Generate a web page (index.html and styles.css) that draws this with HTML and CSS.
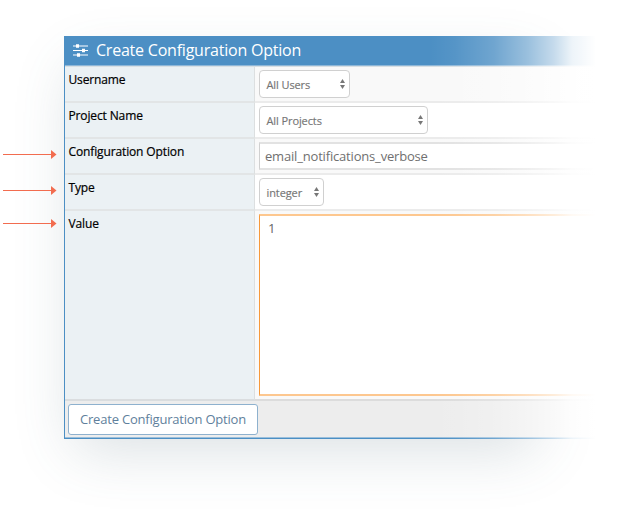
FILE: index.html
```html
<!DOCTYPE html>
<html lang="en">
<head>
<meta charset="utf-8">
<title>Create Configuration Option</title>
<link rel="stylesheet" href="styles.css">
</head>
<body>
<main class="page">
  <aside class="pointers">
    <svg class="arrow" viewBox="0 0 54 9"><path d="M0 4.5h49"/><path class="head" d="M48 0l5.5 4.5L48 9z"/></svg>
    <svg class="arrow" viewBox="0 0 54 9"><path d="M0 4.5h49"/><path class="head" d="M48 0l5.5 4.5L48 9z"/></svg>
    <svg class="arrow arrow-last" viewBox="0 0 54 9"><path d="M0 4.5h49"/><path class="head" d="M48 0l5.5 4.5L48 9z"/></svg>
  </aside>
  <div class="stage">
    <form class="panel">
      <header class="panel-head">
        <svg class="sliders" viewBox="0 0 15 13"><path d="M0 2h15M0 6.500h15M0 11h15"/><path class="knob" d="M3 .3h3v3.400H3zM9 4.800h3v3.400H9zM4 9.300h3v3.400H4z"/></svg>
        <h1 class="title">Create Configuration Option</h1>
      </header>
      <div class="row shaded">
        <span class="label">Username</span>
        <div class="field"><div class="select users"><span>All Users</span><svg class="updown" viewBox="0 0 5 10"><path d="M2.500 0L5 4H0zM0 6h5L2.500 10z"/></svg></div></div>
      </div>
      <div class="row">
        <span class="label">Project Name</span>
        <div class="field"><div class="select projects"><span>All Projects</span><svg class="updown" viewBox="0 0 5 10"><path d="M2.500 0L5 4H0zM0 6h5L2.500 10z"/></svg></div></div>
      </div>
      <div class="row shaded">
        <span class="label">Configuration Option</span>
        <div class="field"><div class="input">email_notifications_verbose</div></div>
      </div>
      <div class="row">
        <span class="label">Type</span>
        <div class="field"><div class="select type"><span>integer</span><svg class="updown" viewBox="0 0 5 10"><path d="M2.500 0L5 4H0zM0 6h5L2.500 10z"/></svg></div></div>
      </div>
      <div class="row shaded value-row">
        <span class="label">Value</span>
        <div class="field"><div class="textarea">1</div></div>
      </div>
      <footer class="panel-foot"><button class="submit" type="button">Create Configuration Option</button></footer>
    </form>
  </div>
</main>
</body>
</html>
```
FILE: styles.css
```css
* { box-sizing: border-box; }
body { margin: 0; background: #fff; font-family: "Open Sans", sans-serif; }
.page { display: flex; width: 622px; height: 516px; overflow: hidden; }
.pointers { width: 64px; flex: none; padding: 150px 0 0 3px; z-index: 1; }
.arrow { display: block; width: 54px; height: 9px; margin-bottom: 27px; stroke: #f26c4f; fill: none; }
.arrow-last { margin-top: -3px; }
.arrow .head { fill: #f26c4f; stroke: none; }
.stage { position: relative; flex: 1; padding-top: 36px; }
.stage::before {
  content: "";
  position: absolute;
  left: 16px; top: 56px; width: 450px; height: 372px;
  box-shadow: 0 16px 56px 6px rgba(70, 98, 116, .2);
}
.stage::after {
  content: "";
  position: absolute;
  inset: 36px 0 77px 0;
  background: linear-gradient(to right, rgba(255,255,255,0) 366px, rgba(255,255,255,.05) 390px, rgba(255,255,255,.2) 430px, rgba(255,255,255,.44) 464px, rgba(255,255,255,.68) 490px, rgba(255,255,255,.9) 508px, #fff 532px);
}
.panel {
  position: relative;
  width: 558px; height: 403px;
  background: #fff;
  border-left: 1px solid #4c8fc4;
}
.panel-head {
  display: flex; align-items: center;
  height: 31px; padding: 0 0 3px 8px;
  background: #4c8fc4;
  border-bottom: 1px solid #d8dfe3;
  box-shadow: inset 0 -1px #8eb7d8;
  color: #fff;
}
.sliders { width: 15px; height: 13px; margin: 1px 8px 0 0; stroke: #fff; stroke-width: 1.2; fill: none; }
.sliders .knob { fill: #fff; stroke: none; }
.title { margin: 0; font-size: 16px; line-height: 22px; font-weight: 400; letter-spacing: -.22px; white-space: nowrap; }
.row { display: flex; height: 36px; background: #fff; border-bottom: 2px solid #ebebeb; }
.shaded { background: #f9f9f9; }
.label {
  width: 190px; flex: none;
  margin-bottom: -2px; padding: 4px 0 0 3.500px;
  background: #ebf1f4; border-right: 1px solid #dcdfe0; border-bottom: 2px solid #e2e5e6;
  color: #000; font-size: 12px; line-height: 17px; letter-spacing: -.13px;
  -webkit-text-stroke: .2px #000;
}
.field { flex: 1; padding: 3px 0 0 4px; }
.select {
  display: flex; align-items: center; justify-content: space-between;
  height: 28px; padding: 0 4px 0 6.500px;
  background: #fff; border: 1px solid #d0d0d0; border-radius: 4px;
  color: #757575; font-size: 11px; letter-spacing: -.1px;
  -webkit-text-stroke: .15px #757575;
}
.users { width: 91px; }
.projects { width: 169px; }
.type { width: 65px; }
.updown { width: 5px; height: 10px; fill: #777; }
.input {
  height: 28px; padding-left: 5px;
  border: solid #e2e2e2; border-width: 2px 0 2px 1px; border-left-color: #d0d0d0; background: #fff;
  color: #707070; font-size: 13px; line-height: 24px; letter-spacing: -.18px;
}
.value-row { height: 190px; border-bottom-color: #dcdcdc; }
.value-row .label { border-bottom-color: #dadddf; }
.textarea {
  height: 182px; padding: 3px 0 0 8px;
  background: #fff; border: solid #fdc78f; border-width: 2px 0; border-left: 1px solid #f7993a;
  color: #666; font-size: 13px; line-height: 18px;
}
.panel-foot { height: 38px; padding: 3px 0 0 3px; background: #ededed; border-bottom: 1px solid #4c8fc4; box-shadow: inset 0 -1px #9bbfdb; }
.submit {
  width: 190px; height: 31px; padding: 0 0 1px;
  border: 1px solid #8eb1ce; border-radius: 3px; background: #fff;
  color: #5f7f9c; font-family: inherit; font-size: 13px; letter-spacing: -.2px; white-space: nowrap;
}
```
